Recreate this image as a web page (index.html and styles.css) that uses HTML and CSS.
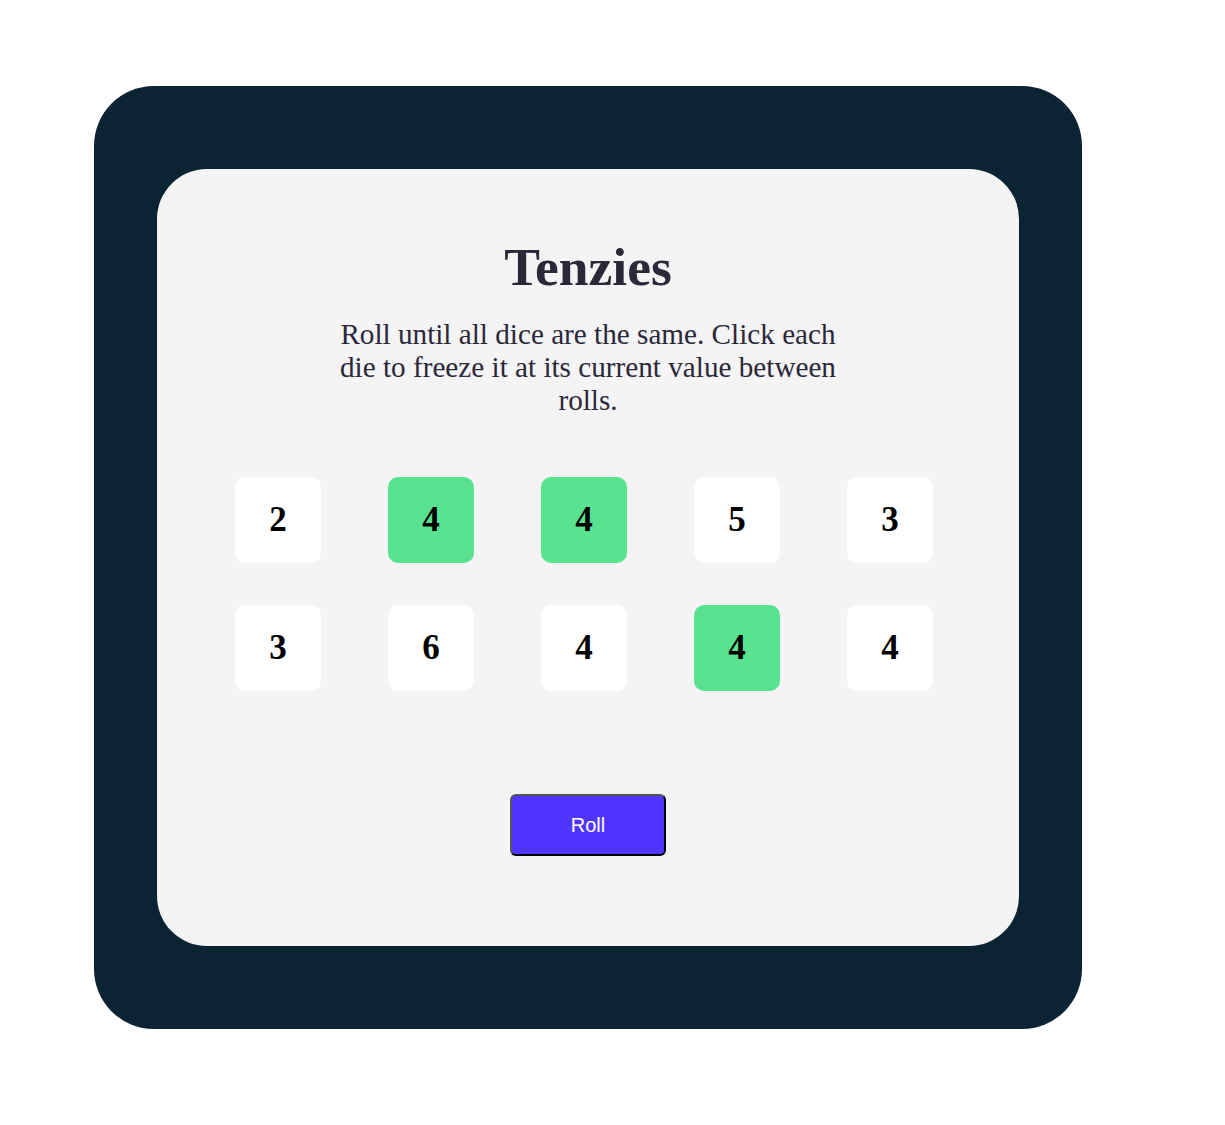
FILE: index.html
```html
<!DOCTYPE html>
<html lang="en">
<head>
<meta charset="utf-8">
<title>Tenzies</title>
<link rel="stylesheet" href="styles.css">
</head>
<body>
<main class="frame">
  <section class="board">
    <h1 class="title">Tenzies</h1>
    <p class="instructions">Roll until all dice are the same. Click each die to freeze it at its current value between rolls.</p>
    <div class="dice">
      <button class="die">2</button>
      <button class="die held">4</button>
      <button class="die held">4</button>
      <button class="die">5</button>
      <button class="die">3</button>
      <button class="die">3</button>
      <button class="die">6</button>
      <button class="die">4</button>
      <button class="die held">4</button>
      <button class="die">4</button>
    </div>
    <button class="roll">Roll</button>
  </section>
</main>
</body>
</html>
```

FILE: styles.css
```css
html, body {
  margin: 0;
  background: #ffffff;
}

body {
  padding: 86px 0 0 94px;
}

.frame {
  box-sizing: border-box;
  width: 988px;
  padding: 83px 63px;
  background: #0B2434;
  border-radius: 60px;
}

.board {
  box-sizing: border-box;
  width: 862px;
  background: #F4F4F4;
  border-radius: 50px;
  padding: 67px 0 90px;
  display: flex;
  flex-direction: column;
  align-items: center;
  font-family: "Liberation Serif", "Times New Roman", serif;
  color: #2B283A;
}

.title {
  margin: 0;
  font-size: 53.5px;
  font-weight: 700;
  line-height: normal;
}

.instructions {
  margin: 20px 0 0;
  width: 515px;
  font-size: 29.2px;
  line-height: normal;
  text-align: center;
}

.dice {
  align-self: flex-start;
  margin: 60px 0 0 78px;
  display: grid;
  grid-template-columns: repeat(5, 86px);
  grid-auto-rows: 86px;
  column-gap: 67px;
  row-gap: 42px;
}

.die {
  border: none;
  border-radius: 10px;
  background: #FFFFFF;
  font-family: "Liberation Serif", "Times New Roman", serif;
  font-size: 35px;
  font-weight: 700;
  color: #000000;
  padding: 0;
}

.die.held {
  background: #59E391;
}

.roll {
  margin-top: 103px;
  box-sizing: border-box;
  width: 156px;
  height: 62px;
  background: #5035FF;
  color: #FFFFFF;
  font-family: "Liberation Sans", Arial, sans-serif;
  font-size: 20px;
  border-width: 2px;
  border-style: solid;
  border-color: #555555 #000000 #000000 #555555;
  border-radius: 6px;
  padding: 0;
}
```
